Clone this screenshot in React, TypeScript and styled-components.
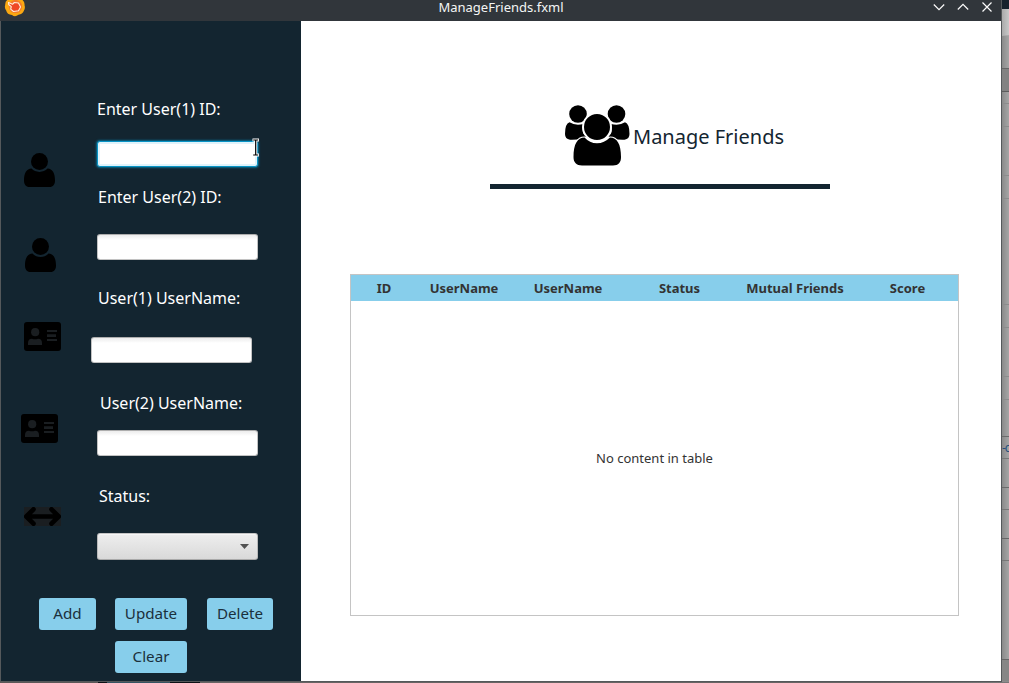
import React from "react";
import styled, { createGlobalStyle } from "styled-components";

const GlobalStyle = createGlobalStyle`
  * { box-sizing: border-box; }
  html, body { margin: 0; padding: 0; overflow: hidden; }
  body { font-family: "Noto Sans", sans-serif; background: #555; }
`;

const Desktop = styled.div`
  position: relative;
  display: grid;
  grid-template-columns: 1002px 7px;
  grid-template-rows: 682px 1px;
  width: 1009px;
  height: 683px;
  overflow: hidden;
`;

const Window = styled.div`
  display: flex;
  flex-direction: column;
  border: solid #55595b;
  border-width: 0 1px 1px;
`;

const TitleBar = styled.header`
  display: flex;
  align-items: flex-start;
  height: 21px;
  flex: none;
  padding: 0 8px 0 4px;
  margin-left: -1px;
  background: #31363b;
  color: #f4f5f5;
`;

const WindowTitle = styled.h1`
  flex: 1;
  margin: 0;
  padding-left: 43px;
  text-align: center;
  font-size: 13px;
  line-height: 14px;
  font-weight: 400;
`;

const WindowControls = styled.div`
  display: flex;
  gap: 12px;
`;

const Body = styled.div`
  display: flex;
  flex: 1;
  min-height: 0;
`;

const Sidebar = styled.aside`
  display: flex;
  flex-direction: column;
  width: 300px;
  flex: none;
  background: #132530;
`;

const FormArea = styled.div`
  display: flex;
  height: 539px;
  flex: none;
`;

const IconColumn = styled.div`
  display: flex;
  flex-direction: column;
  width: 90px;
  padding-top: 132px;
`;

const FieldIcon = styled.svg<{ $left: number; $gap?: number }>`
  display: block;
  flex: none;
  margin-left: ${(p) => p.$left}px;
  margin-top: ${(p) => p.$gap ?? 0}px;
`;

const FieldColumn = styled.form`
  display: flex;
  flex-direction: column;
  align-items: flex-start;
  padding-top: 77px;
`;

const Field = styled.label<{ $height: number; $indent: number }>`
  display: flex;
  flex-direction: column;
  height: ${(p) => p.$height}px;
  padding-left: ${(p) => p.$indent}px;
  font-size: 16px;
  line-height: 22px;
  color: #fff;
  white-space: nowrap;
`;

const TextInput = styled.input<{ $gap: number; $shift?: number; $active?: boolean }>`
  width: 161px;
  height: 26px;
  margin: ${(p) => p.$gap}px 0 0 ${(p) => p.$shift ?? 0}px;
  padding: 0 7px;
  border: 1px solid ${(p) => (p.$active ? "#0894c6" : "#c2c2c2")};
  border-top-color: ${(p) => (p.$active ? "#0894c6" : "#adadad")};
  border-radius: 3px;
  outline: none;
  background: ${(p) => (p.$active ? "#fff" : "linear-gradient(#ececec, #fff 5px)")};
  box-shadow: ${(p) =>
    p.$active ? "0 0 2px 1px rgba(3, 158, 211, .55), inset 0 0 0 2px #dff3fb" : "none"};
`;

const ComboBox = styled.div`
  display: flex;
  align-items: center;
  justify-content: flex-end;
  width: 161px;
  height: 27px;
  margin: 26px 0 0 -2px;
  padding-right: 8px;
  border: 1px solid #b9b9b9;
  border-top-color: #c5c5c5;
  border-bottom-color: #a9a9a9;
  border-radius: 3px;
  background: linear-gradient(#eeeeee, #d9d9d9);
  box-shadow: inset 0 1px #f6f6f6;
`;

const ButtonGrid = styled.div`
  display: grid;
  grid-template-columns: 57px 73px 66px;
  grid-auto-rows: 32px;
  column-gap: 19px;
  row-gap: 11px;
  padding: 38px 0 0 38px;
`;

const ActionButton = styled.button<{ $width: number; $column?: number }>`
  grid-column: ${(p) => p.$column ?? "auto"};
  width: ${(p) => p.$width}px;
  padding: 0 0 3px;
  border: 0;
  border-radius: 3px;
  background: #87ceeb;
  color: #1b303c;
  font: 15.2px/22px "Noto Sans", sans-serif;
`;

const Content = styled.main`
  display: flex;
  flex-direction: column;
  flex: 1;
  background: #fff;
`;

const Heading = styled.div`
  display: flex;
  width: 340px;
  height: 168px;
  margin-left: 189px;
  padding: 84px 0 0 75px;
  border-bottom: 5px solid #132530;
  flex: none;
`;

const HeadingText = styled.h2`
  margin: 18px 0 0 3px;
  font-size: 20px;
  line-height: 28px;
  font-weight: 400;
  color: #132530;
  white-space: nowrap;
`;

const Table = styled.section`
  display: flex;
  flex-direction: column;
  width: 609px;
  height: 342px;
  margin: 85px 0 0 49px;
  border: 1px solid #c4c4c4;
`;

const TableHeader = styled.div`
  display: grid;
  grid-template-columns: 66px 94px 114px 109px 122px 102px;
  height: 26px;
  background: #87ceeb;
  color: #333;
  font-size: 13px;
  line-height: 26px;
  font-weight: 700;
  text-align: center;

  span:last-child { padding-left: 1px; }
`;

const EmptyState = styled.div`
  display: flex;
  flex: 1;
  align-items: center;
  justify-content: center;
  font-size: 13px;
  color: #333;
`;

const BackgroundEdge = styled.div`
  display: flex;
  flex-direction: column;
  overflow: hidden;
  background: linear-gradient(90deg, #8a8a8a, #a6a6a6);
`;

const BackgroundRow = styled.div<{ $height: number; $line?: string; $fill?: string }>`
  height: ${(p) => p.$height}px;
  flex: none;
  border-bottom: 1px solid ${(p) => p.$line ?? "#8c8c8c"};
  background: ${(p) => p.$fill ?? "transparent"};
  color: #28507c;
  font-size: 12px;
  line-height: 22px;
  letter-spacing: -1px;
  white-space: nowrap;
`;

const BottomEdge = styled.div`
  grid-column: 1 / 3;
  background: linear-gradient(90deg, #5c5858 0 98px, #0c1116 98px 107px, #365463 107px 170px, #0c1116 170px 200px, #686464 200px 880px, #777 100%);
`;

const Pointer = styled.svg`
  position: absolute;
  left: 252px;
  top: 138px;
`;

const UserIcon = ({ left, gap }: { left: number; gap?: number }) => (
  <FieldIcon $left={left} $gap={gap} width="31" height="34" viewBox="0 0 31 34">
    <circle cx="15.5" cy="8.6" r="8.5" />
    <path d="M7.5 15.6C9.6 17.8 12.2 18.9 15.5 18.9S21.4 17.8 23.5 15.6C28.5 15.7 31 20.3 31 27.5C31 31.6 29 34 25.7 34H5.3C2 34 0 31.6 0 27.5C0 20.3 2.5 15.7 7.5 15.6Z" />
  </FieldIcon>
);

const CardIcon = ({ left, gap }: { left: number; gap?: number }) => (
  <FieldIcon $left={left} $gap={gap} width="37" height="29" viewBox="0 0 37 29">
    <rect width="37" height="29" rx="3" />
    <g fill="#1a1e21">
      <circle cx="11.2" cy="10.2" r="4.1" />
      <path d="M4 23V21Q4 16.7 8 16.7Q11 18 14 16.7Q18 16.7 18 21V23Z" />
      <path d="M23 8H33V10H23ZM23 12.3H32V15H23ZM23 17H33V19H23Z" />
    </g>
  </FieldIcon>
);

const ArrowsIcon = () => (
  <FieldIcon $left={23} $gap={64} width="37" height="19" viewBox="0 0 37 19">
    <path fill="#1a1e21" d="M0 0H37V19H0Z" />
    <path d="M9.5 2.3L2.3 9.5L9.5 16.7M27.5 2.3L34.7 9.5L27.5 16.7M3 9.5H34" fill="none" stroke="#000" strokeWidth="4.6" strokeLinecap="round" strokeLinejoin="round" />
  </FieldIcon>
);

const FriendsIcon = () => (
  <svg width="65" height="61" viewBox="0 0 65 61">
    <circle cx="13" cy="9" r="8.8" />
    <circle cx="51.5" cy="9" r="8.8" />
    <path d="M4.5 17.2Q10 21 18.5 19Q16 28 21 31.5Q18 35 5 34.7Q0 34 0 29Q0 18.5 4.5 17.2Z" />
    <path d="M60 17.2Q54.5 21 46 19Q48.5 28 43.5 31.5Q46.5 35 59.5 34.7Q64.5 34 64.5 29Q64.5 18.5 60 17.2Z" />
    <path
      d="M19.5 32.5C23 36 27 38.3 32 38.3S41 36 45 32.5C52 32.5 56 39 56 52C56 57.5 53.5 60.5 48 60.5H17C11.5 60.5 8.5 57.5 8.5 52C8.5 39 12.5 32.5 19.5 32.5Z"
      stroke="#fff"
      strokeWidth="2"
      paintOrder="stroke"
    />
    <circle cx="32" cy="22" r="14" stroke="#fff" strokeWidth="2" />
  </svg>
);

const AppLogo = () => (
  <svg width="22" height="17" viewBox="0 0 22 17">
    <path d="M4-.5Q7-4 11-4Q15-4 18-.5Q21 2 20.5 5Q21.5 8 20 10.5Q18.5 14.3 14.5 14.8Q11 17.5 8 15Q3 14.5 2.2 10.5Q.2 8 1.2 5Q1 1 4-.5Z" fill="#fba812" />
    <circle cx="11.5" cy="6.5" r="6.6" fill="#f57a2c" />
    <path d="M4.5 2.5L8.5 4.3L10.3 2.5L14.5 3L16.5 7L14.5 10.8L9.5 11.5L6.7 9.2L7.3 6.7L4.7 4.5Z" fill="#ef4925" stroke="#fff0dc" strokeWidth="1.1" strokeLinejoin="round" />
  </svg>
);

const ControlIcon = ({ path }: { path: string }) => (
  <svg width="12" height="14" viewBox="0 0 12 14">
    <path d={path} fill="none" stroke="#fcfcfc" strokeWidth="1.2" />
  </svg>
);

const columns = ["ID", "UserName", "UserName", "Status", "Mutual Friends", "Score"];

export default function App() {
  return (
    <>
      <GlobalStyle />
      <Desktop>
        <Window>
          <TitleBar>
            <AppLogo />
            <WindowTitle>ManageFriends.fxml</WindowTitle>
            <WindowControls>
              <ControlIcon path="M.8 4.5L6 9.7L11.2 4.5" />
              <ControlIcon path="M.8 9.5L6 4.3L11.2 9.5" />
              <ControlIcon path="M1.5 2.5L10.5 11.5M10.5 2.5L1.5 11.5" />
            </WindowControls>
          </TitleBar>
          <Body>
            <Sidebar>
              <FormArea>
                <IconColumn>
                  <UserIcon left={23} />
                  <UserIcon left={24} gap={51} />
                  <CardIcon left={23} gap={50} />
                  <CardIcon left={20} gap={63} />
                  <ArrowsIcon />
                </IconColumn>
                <FieldColumn>
                  <Field $height={88} $indent={6}>
                    Enter User(1) ID:
                    <TextInput $gap={21} $active />
                  </Field>
                  <Field $height={101} $indent={7}>
                    Enter User(2) ID:
                    <TextInput $gap={26} $shift={-1} />
                  </Field>
                  <Field $height={105} $indent={7}>
                    User(1) UserName:
                    <TextInput $gap={28} $shift={-7} />
                  </Field>
                  <Field $height={93} $indent={9}>
                    User(2) UserName:
                    <TextInput $gap={16} $shift={-3} />
                  </Field>
                  <Field $height={75} $indent={8} as="div">
                    Status:
                    <ComboBox>
                      <svg width="9" height="5" viewBox="0 0 9 5">
                        <path d="M0 0H9L4.5 5Z" fill="#525252" />
                      </svg>
                    </ComboBox>
                  </Field>
                </FieldColumn>
              </FormArea>
              <ButtonGrid>
                <ActionButton $width={57}>Add</ActionButton>
                <ActionButton $width={72}>Update</ActionButton>
                <ActionButton $width={66}>Delete</ActionButton>
                <ActionButton $width={72} $column={2}>Clear</ActionButton>
              </ButtonGrid>
            </Sidebar>
            <Content>
              <Heading>
                <FriendsIcon />
                <HeadingText>Manage Friends</HeadingText>
              </Heading>
              <Table>
                <TableHeader>
                  {columns.map((name, i) => (
                    <span key={i}>{name}</span>
                  ))}
                </TableHeader>
                <EmptyState>No content in table</EmptyState>
              </Table>
            </Content>
          </Body>
        </Window>
        <BackgroundEdge>
          <BackgroundRow $height={9} $fill="#17222c" $line="#17222c" />
          <BackgroundRow $height={27} $fill="linear-gradient(90deg, #aaa, #c8c8c8)" $line="#aaa" />
          <BackgroundRow $height={33} $line="#666" />
          <BackgroundRow $height={23} $fill="#828282" $line="#5c5c5c" />
          <BackgroundRow $height={12} />
          <BackgroundRow $height={23} />
          <BackgroundRow $height={49} />
          <BackgroundRow $height={23} />
          <BackgroundRow $height={106} />
          <BackgroundRow $height={23} />
          <BackgroundRow $height={49} />
          <BackgroundRow $height={23} />
          <BackgroundRow $height={37} $line="#6b6b6b" />
          <BackgroundRow $height={22} $line="#777">-c</BackgroundRow>
          <BackgroundRow $height={29} $line="#6b6b6b" />
          <BackgroundRow $height={22} $line="#777" />
          <BackgroundRow $height={29} $line="#666" />
          <BackgroundRow $height={22} $line="#777" />
          <BackgroundRow $height={99} $line="#666" />
          <BackgroundRow $height={22} $fill="#868686" />
        </BackgroundEdge>
        <BottomEdge />
        <Pointer width="8" height="19" viewBox="0 0 8 19">
          <path d="M.5 2H7M3.7 1.5V17M.5 17H7" stroke="#fff" strokeWidth="3" />
          <path d="M1.2 2H6.2M3.7 2V17M1.2 17H6.2" stroke="#000" strokeWidth="1.2" />
        </Pointer>
      </Desktop>
    </>
  );
}
